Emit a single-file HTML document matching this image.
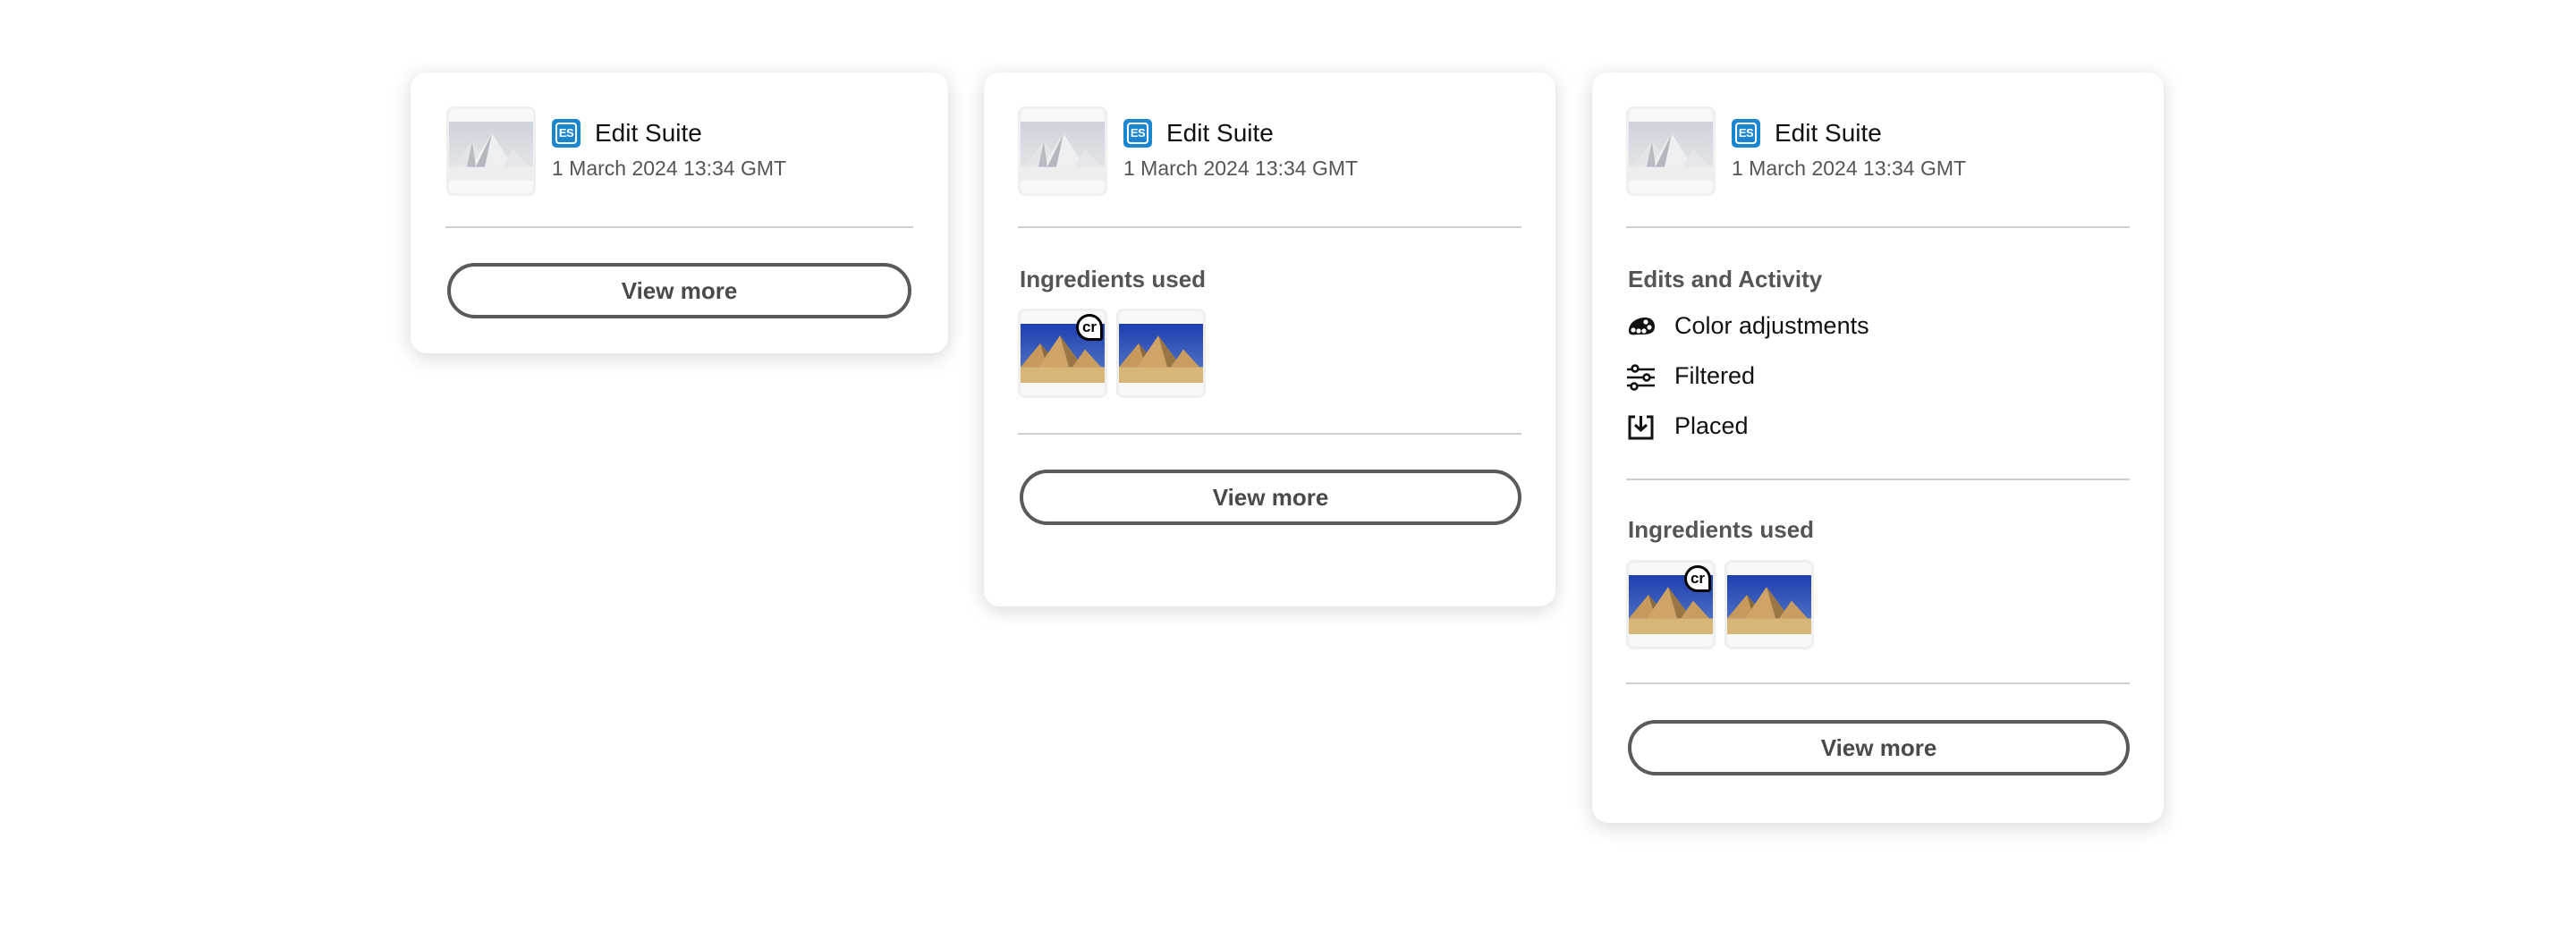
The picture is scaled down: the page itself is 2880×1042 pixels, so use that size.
<!DOCTYPE html>
<html><head><meta charset="utf-8"><style>
*{box-sizing:border-box;margin:0;padding:0}
body{width:2880px;height:1042px;background:#fff;position:relative;overflow:hidden;font-family:"Liberation Sans",sans-serif}
.card{position:absolute;background:#fff;border-radius:18px;box-shadow:0 4px 22px rgba(0,0,0,.16)}
.abs{position:absolute}
.thumb{position:absolute;width:100px;height:100px;border:3px solid #efefef;border-radius:8px;background:#f8f8f8;overflow:hidden}
.thumb svg{position:absolute;left:0;top:14px;width:94px;height:66px}
.es{position:absolute;width:32px;height:32px;background:#1b86d0;border-radius:5px}
.es span{position:absolute;left:4px;top:4px;width:24px;height:24px;border:2px solid #fff;border-radius:4px;color:#fff;font-weight:bold;font-size:13px;line-height:20px;text-align:center;letter-spacing:-.5px}
.title{position:absolute;font-size:28px;color:#111}
.date{position:absolute;font-size:23px;color:#555}
.div{position:absolute;height:2px;background:#cfcfcf}
.btn{position:absolute;height:62px;border:4px solid #5a5a5a;border-radius:31px;text-align:center;font-weight:bold;font-size:26px;color:#4a4a4a;line-height:54px}
.h{position:absolute;font-weight:bold;font-size:26px;color:#555}
.item{position:absolute;font-size:27px;color:#111}
.cr{position:absolute;left:62px;top:3px;width:30px;height:30px;background:#fff;border:3px solid #000;border-radius:15px 15px 3px 15px;font-size:17px;font-weight:bold;line-height:23px;text-align:center;color:#000}
</style></head><body>
<svg width="0" height="0" style="position:absolute"><defs>
<linearGradient id="sky" x1="0" y1="0" x2="0" y2="1"><stop offset="0" stop-color="#1f3fb0"/><stop offset="1" stop-color="#5a7fc8"/></linearGradient>
<linearGradient id="snow" x1="0" y1="0" x2="0" y2="1"><stop offset="0" stop-color="#cfd3da"/><stop offset="1" stop-color="#e8e9ec"/></linearGradient>
<symbol id="pyr" viewBox="0 0 94 60" preserveAspectRatio="none"><rect width="94" height="60" fill="url(#sky)"/><rect y="44" width="94" height="16" fill="#d8b677"/><polygon points="0,44 22,20 44,44" fill="#c79a5c"/><polygon points="22,20 44,44 30,44" fill="#8a6a3c"/><polygon points="20,44 44,12 70,44" fill="#d0a466"/><polygon points="44,12 70,44 54,44" fill="#9a7644"/><polygon points="58,44 72,26 90,44" fill="#c99c60"/></symbol>
<symbol id="snowp" viewBox="0 0 94 60" preserveAspectRatio="none"><rect width="94" height="60" fill="url(#snow)"/><rect y="46" width="94" height="14" fill="#eeeeef"/><polygon points="4,46 26,20 46,46" fill="#e4e5e8"/><polygon points="24,46 48,12 72,46" fill="#eeeff1"/><polygon points="26,20 30,46 20,46" fill="#b8bbc2"/><polygon points="48,12 40,46 30,46" fill="#b4b7be"/><polygon points="60,46 72,28 90,46" fill="#e6e7ea"/></symbol>
</defs></svg>

<!-- Card 1 -->
<div class="card" style="left:459px;top:81px;width:601px;height:314px">
 <div class="thumb" style="left:40px;top:38px"><svg preserveAspectRatio="none"><use href="#snowp"/></svg></div>
 <div class="es" style="left:158px;top:52px"><span>ES</span></div>
 <div class="title" style="left:206px;top:52px">Edit Suite</div>
 <div class="date" style="left:158px;top:94px">1 March 2024 13:34 GMT</div>
 <div class="div" style="left:39px;top:172px;width:523px"></div>
 <div class="btn" style="left:41px;top:213px;width:519px">View more</div>
</div>

<!-- Card 2 -->
<div class="card" style="left:1100px;top:81px;width:639px;height:597px">
 <div class="thumb" style="left:38px;top:38px"><svg preserveAspectRatio="none"><use href="#snowp"/></svg></div>
 <div class="es" style="left:156px;top:52px"><span>ES</span></div>
 <div class="title" style="left:204px;top:52px">Edit Suite</div>
 <div class="date" style="left:156px;top:94px">1 March 2024 13:34 GMT</div>
 <div class="div" style="left:38px;top:172px;width:563px"></div>
 <div class="h" style="left:40px;top:216px">Ingredients used</div>
 <div class="thumb" style="left:38px;top:264px"><svg preserveAspectRatio="none"><use href="#pyr"/></svg><div class="cr">cr</div></div>
 <div class="thumb" style="left:148px;top:264px"><svg preserveAspectRatio="none"><use href="#pyr"/></svg></div>
 <div class="div" style="left:38px;top:403px;width:563px"></div>
 <div class="btn" style="left:40px;top:444px;width:561px">View more</div>
</div>

<!-- Card 3 -->
<div class="card" style="left:1780px;top:81px;width:639px;height:839px">
 <div class="thumb" style="left:38px;top:38px"><svg preserveAspectRatio="none"><use href="#snowp"/></svg></div>
 <div class="es" style="left:156px;top:52px"><span>ES</span></div>
 <div class="title" style="left:204px;top:52px">Edit Suite</div>
 <div class="date" style="left:156px;top:94px">1 March 2024 13:34 GMT</div>
 <div class="div" style="left:38px;top:172px;width:563px"></div>
 <div class="h" style="left:40px;top:216px">Edits and Activity</div>
 <svg class="abs" style="left:39px;top:271px" width="32" height="26" viewBox="0 0 32 26"><path d="M2 18 C2 8 12 3 20 3 C28 3 31 8 31 13 C31 20 26 22 16 22 C8 22 2 24 2 18Z" fill="#111"/><circle cx="7" cy="17" r="2.6" fill="#fff"/><circle cx="13" cy="18" r="2.6" fill="#fff"/><circle cx="19" cy="18" r="2.6" fill="#fff"/><circle cx="25" cy="14" r="2.6" fill="#fff"/><circle cx="21" cy="8" r="2.6" fill="#fff"/></svg>
 <div class="item" style="left:92px;top:268px">Color adjustments</div>
 <svg class="abs" style="left:39px;top:326px" width="32" height="30" viewBox="0 0 32 30" fill="none" stroke="#111" stroke-width="2.6"><path d="M0 6H31M0 15H31M0 24H31"/><circle cx="9" cy="5" r="3.4" fill="#fff"/><circle cx="22" cy="15" r="3.4" fill="#fff"/><circle cx="8" cy="25" r="3.4" fill="#fff"/></svg>
 <div class="item" style="left:92px;top:324px">Filtered</div>
 <svg class="abs" style="left:40px;top:382px" width="30" height="30" viewBox="0 0 30 30" fill="none" stroke="#111" stroke-width="3"><path d="M8 3H2V27H27V3H21"/><path d="M14.5 2V18M8 12L14.5 18L21 12"/></svg>
 <div class="item" style="left:92px;top:380px">Placed</div>
 <div class="div" style="left:38px;top:454px;width:563px"></div>
 <div class="h" style="left:40px;top:496px">Ingredients used</div>
 <div class="thumb" style="left:38px;top:545px"><svg preserveAspectRatio="none"><use href="#pyr"/></svg><div class="cr">cr</div></div>
 <div class="thumb" style="left:148px;top:545px"><svg preserveAspectRatio="none"><use href="#pyr"/></svg></div>
 <div class="div" style="left:38px;top:682px;width:563px"></div>
 <div class="btn" style="left:40px;top:724px;width:561px">View more</div>
</div>
</body></html>
